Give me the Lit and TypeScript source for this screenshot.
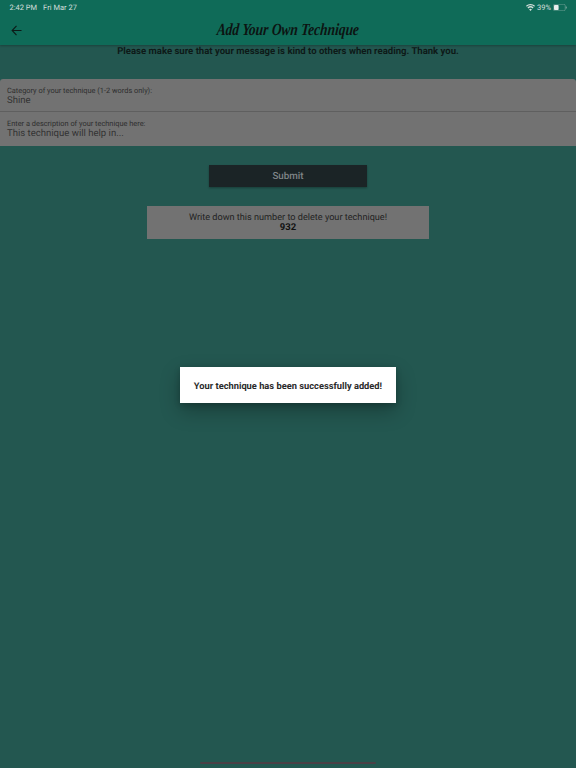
import { LitElement, html, css } from "lit";
import { customElement } from "lit/decorators.js";

@customElement("app-root")
export class AppRoot extends LitElement {
  static styles = css`
    :host { display: block; font-family: Roboto, "Liberation Sans", sans-serif; text-rendering: geometricPrecision; }
    .page { position: relative; width: 576px; height: 768px; overflow: hidden; background: #235750; display: flex; flex-direction: column; }
    .top { height: 45px; flex: none; background: #0f6b58; position: relative; box-shadow: 0 1px 2px rgba(0,0,0,.25); }
    .status { height: 13px; padding: 0 9px 0 9.5px; display: flex; justify-content: space-between; align-items: center; font-size: 7.5px; color: #d4dfdc; }
    .status .l { display: flex; gap: 6px; padding-top: 1px; }
    .status .r { display: flex; align-items: center; gap: 2px; padding-top: 1px; }
    .bar { height: 32px; display: grid; grid-template-columns: 33px 1fr 33px; align-items: center; }
    .back { display: flex; justify-content: center; padding-top: 2px; }
    .title { text-align: center; font-family: "Liberation Serif", cursive; font-style: italic; font-weight: 700; font-size: 17px; color: #0c1412; transform: scaleX(.79) skewX(-6deg); padding-top: 2px; }
    .msg { text-align: center; font-size: 9.55px; font-weight: 700; line-height: 13px; color: #0e1a18; height: 13px; }
    .form { margin-top: 21px; height: 66.7px; background: #727272; border-radius: 3px 3px 0 0; display: flex; flex-direction: column; }
    .field { height: 33.5px; padding: 6.5px 7px 0; box-sizing: border-box; border-bottom: 1px solid #5f5f5f; }
    .field:last-child { border-bottom: none; }
    .field .lab { font-size: 7.4px; line-height: 9.5px; color: #2e2e2e; }
    .field .val { font-size: 9.55px; line-height: 11px; color: #333; }
    .submit { align-self: center; margin-top: 19px; width: 157.5px; height: 22.6px; background: #1b2426; box-shadow: 0 1px 2px rgba(0,0,0,.3); display: flex; align-items: center; justify-content: center; color: #7f8587; font-size: 9.8px; font-weight: 500; padding-top: 2px; box-sizing: border-box; }
    .note { align-self: center; margin-top: 18.7px; width: 281.4px; height: 33px; background: #727272; text-align: center; box-sizing: border-box; padding-top: 7px; }
    .note div { font-size: 9.15px; line-height: 10px; color: #222; }
    .note b { display: block; font-size: 9.5px; line-height: 10px; color: #111; font-weight: 700; }
    .dialog { position: absolute; left: 180.3px; top: 367.3px; width: 215.4px; height: 35.4px; background: #fff; box-shadow: 0 8px 20px rgba(0,0,0,.28), 0 2px 6px rgba(0,0,0,.2); display: flex; align-items: center; justify-content: center; font-size: 9.3px; font-weight: 700; color: #2a2a2a; padding-top: 3px; box-sizing: border-box; }
    .home { position: absolute; left: 200px; bottom: 4px; width: 176px; height: 2.5px; border-radius: 2px; background: #4a4046; }
  `;

  render() {
    return html`<div class="page">
      <div class="top">
        <div class="status">
          <div class="l"><span>2:42 PM</span><span>Fri Mar 27</span></div>
          <div class="r">
            <svg width="9" height="7" viewBox="0 0 18 14"><path fill="#d4dfdc" d="M9 14 6.2 10.8a4 4 0 0 1 5.6 0zM4.6 9 2.9 7a9 9 0 0 1 12.2 0l-1.7 2a6.6 6.6 0 0 0-8.8 0zM1.6 5.5 0 3.6a13.4 13.4 0 0 1 18 0l-1.6 1.9a11 11 0 0 0-14.8 0z"/></svg>
            <span>39%</span>
            <svg width="14" height="7" viewBox="0 0 14 7"><rect x=".25" y=".25" width="12" height="6.5" rx="1.6" fill="none" stroke="#8fb0a8" stroke-width=".5"/><rect x="1" y="1" width="4.6" height="5" rx=".8" fill="#e8eeec"/><rect x="12.8" y="2.4" width=".9" height="2.2" rx=".4" fill="#8fb0a8"/></svg>
          </div>
        </div>
        <div class="bar">
          <div class="back"><svg width="11" height="11" viewBox="0 0 24 24"><path fill="none" stroke="#0c1a17" stroke-width="2.4" d="M23 12H3M12 2 2.5 12l9.5 10"/></svg></div>
          <div class="title">Add Your Own Technique</div>
          <div></div>
        </div>
      </div>
      <div class="msg">Please make sure that your message is kind to others when reading. Thank you.</div>
      <div class="form">
        <div class="field"><div class="lab">Category of your technique (1-2 words only):</div><div class="val">Shine</div></div>
        <div class="field"><div class="lab">Enter a description of your technique here:</div><div class="val">This technique will help in...</div></div>
      </div>
      <div class="submit">Submit</div>
      <div class="note"><div>Write down this number to delete your technique!</div><b>932</b></div>
      <div class="dialog">Your technique has been successfully added!</div>
      <div class="home"></div>
    </div>`;
  }
}
